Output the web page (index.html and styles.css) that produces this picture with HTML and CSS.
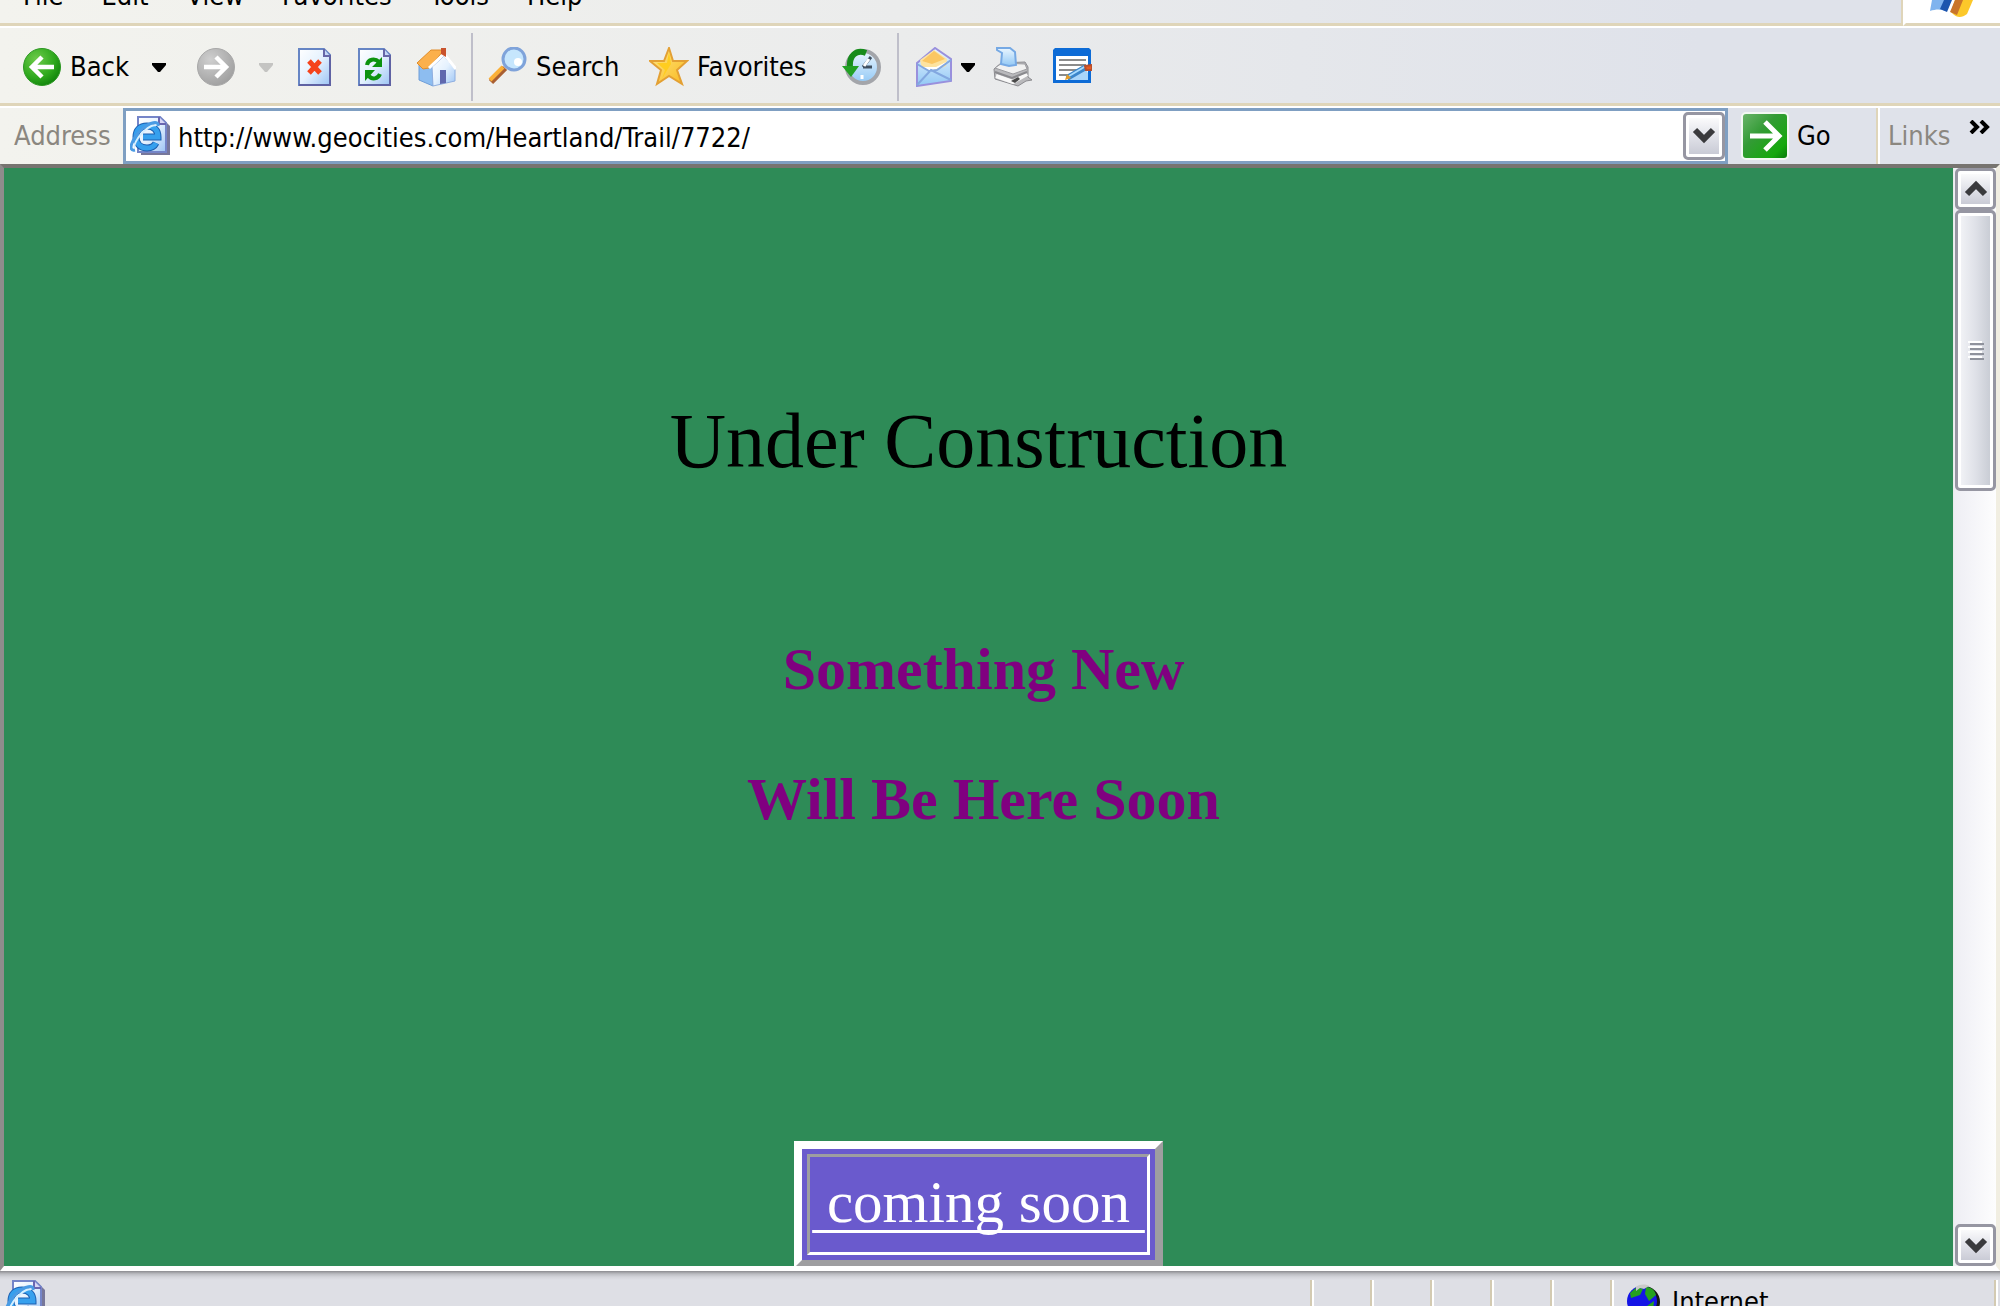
FILE: index.html
```html
<!DOCTYPE html>
<html lang="en">
<head>
<meta charset="utf-8">
<title>Under Construction</title>
<link rel="stylesheet" href="styles.css">
</head>
<body>
<svg class="defs" aria-hidden="true">
  <defs>
    <radialGradient id="green" cx=".35" cy=".3" r=".8"><stop offset="0" stop-color="#6fcb4c"/><stop offset=".6" stop-color="#2fa91d"/><stop offset="1" stop-color="#0b7d08"/></radialGradient>
    <radialGradient id="grey" cx=".35" cy=".3" r=".8"><stop offset="0" stop-color="#cfcfcf"/><stop offset="1" stop-color="#9c9c9c"/></radialGradient>
    <linearGradient id="sheet" x1="0" y1="0" x2="1" y2="1"><stop offset="0" stop-color="#fff"/><stop offset=".5" stop-color="#e4f1fe"/><stop offset="1" stop-color="#9cc4f4"/></linearGradient>
    <linearGradient id="blue" x1="0" y1="0" x2="0" y2="1"><stop offset="0" stop-color="#eaf6ff"/><stop offset="1" stop-color="#92c8f5"/></linearGradient>
    <linearGradient id="gold" x1="0" y1="0" x2="1" y2="1"><stop offset="0" stop-color="#ffe98a"/><stop offset="1" stop-color="#f9b91c"/></linearGradient>
    <linearGradient id="go" x1="0" y1="0" x2="1" y2="1"><stop offset="0" stop-color="#6cb56c"/><stop offset=".4" stop-color="#339b35"/><stop offset=".8" stop-color="#15a80c"/><stop offset="1" stop-color="#08750a"/></linearGradient>
    <symbol id="ie" viewBox="0 0 40 40">
      <path d="M10 3h23l7 7v29H11z" fill="#77779a"/>
      <path d="M8 1h22l6 6v29H8z" fill="url(#sheet)" stroke="#7585c8" stroke-width="2"/>
      <path d="M29 1v7h7" fill="#d8d6f5" stroke="#6a66b0" stroke-width="2"/>
      <path d="M26 27c-2 4-5 5-9 5-6 0-11-4-11-11s4-11 11-11 11 4 11 11H13" fill="none" stroke="#1d5fb0" stroke-width="7"/>
      <path d="M26 27c-2 4-5 5-9 5-6 0-11-4-11-11s4-11 11-11 11 4 11 11H13" fill="none" stroke="#36a0ee" stroke-width="5"/>
      <path d="M5 34C-3 36 2 22 12 13 20 6 29 4 28 10" fill="none" stroke="#4a9be4" stroke-width="3"/>
      <path d="M5 31C3 31 6 23 13 16 19 10 25 8 26 10" fill="none" stroke="#d6efff" stroke-width="2"/>
    </symbol>
  </defs>
</svg>

<header class="chrome">
  <div class="menu-row">
    <nav class="menu" aria-label="Menu bar">
      <a href="#file">File</a><a href="#edit">Edit</a><a href="#view">View</a><a href="#favorites">Favorites</a><a href="#tools">Tools</a><a href="#help">Help</a>
    </nav>
    <div class="flag">
      <svg width="48" height="20" viewBox="0 0 48 20" aria-hidden="true">
        <path d="M4 0h18l-4 11c-5-2-10-2-16 0z" fill="#7fb3ee"/><path d="M16 0h8l-5 12-7-3z" fill="#1c55ae"/><path d="M27 0h18l-6 14c-5 4-10 4-14 0l-2-2z" fill="#fcc82a"/><path d="M27 0h8l-6 15-7-3z" fill="#c9752b"/>
      </svg>
    </div>
  </div>

  <div class="toolbar" role="toolbar" aria-label="Standard buttons">
    <button class="tool back" type="button">
      <svg class="icon" viewBox="0 0 40 40"><circle cx="20" cy="20" r="18.500" fill="url(#green)" stroke="#2d9823"/><path d="M32 20H12M20 10 10 20l10 10" fill="none" stroke="#fff" stroke-width="4.500"/></svg>
      <span>Back</span>
    </button>
    <button class="drop" type="button" aria-label="Back history"><svg width="14" height="9" viewBox="0 0 14 9"><path d="M0 0h14v2L8 9H6L0 2z" fill="#000"/></svg></button>
    <button class="tool forward" type="button" aria-label="Forward">
      <svg class="icon" viewBox="0 0 40 40"><circle cx="20" cy="20" r="18.500" fill="url(#grey)" stroke="#a8a8a8"/><path d="M8 20h20M20 10l10 10-10 10" fill="none" stroke="#fff" stroke-width="4.500"/></svg>
    </button>
    <button class="drop drop-wide" type="button" aria-label="Forward history"><svg width="14" height="9" viewBox="0 0 14 9"><path d="M0 0h14v2L8 9H6L0 2z" fill="#c4c4c2"/></svg></button>
    <button class="tool" type="button" aria-label="Stop">
      <svg class="icon" viewBox="0 0 40 40"><path d="M3 2h25l6 6v30H3z" fill="url(#sheet)" stroke="#6685c4" stroke-width="2"/><path d="M34 8v30H3" fill="none" stroke="#5f62a3" stroke-width="2"/><path d="M28 2v7h6" fill="#c5d8f7" stroke="#6667a8" stroke-width="2"/><path d="m13 14 11 12M24 14 13 26" stroke="#f5431b" stroke-width="5"/></svg>
    </button>
    <button class="tool" type="button" aria-label="Refresh">
      <svg class="icon" viewBox="0 0 40 40"><path d="M3 2h25l6 6v30H3z" fill="url(#sheet)" stroke="#6685c4" stroke-width="2"/><path d="M34 8v30H3" fill="none" stroke="#5f62a3" stroke-width="2"/><path d="M28 2v7h6" fill="#c5d8f7" stroke="#6667a8" stroke-width="2"/><path d="M11 18c1-6 8-7 12-3M24 27c-2 5-8 6-11 2" fill="none" stroke="#0c930e" stroke-width="4"/><path d="M26 10v10H16zM9 34V23h10z" fill="#0c930e"/></svg>
    </button>
    <button class="tool" type="button" aria-label="Home">
      <svg class="icon" viewBox="0 0 40 40"><path d="M3 17v16l14 6V20z" fill="#8dbdf0" stroke="#6f9ed8"/><path d="M16 20 28 9l11 13v12l-22 5z" fill="url(#sheet)" stroke="#8eaee0"/><path d="M1 16 15 3h13L13 21l-6 1z" fill="#fbb04c" stroke="#e08c2a"/><path d="m13 21 15-14 12 15" fill="none" stroke="#fff" stroke-width="3"/><path d="M25 1h5v9l-5-3z" fill="#c9532d"/><path d="M24 23h6v13l-6 1z" fill="#6068ae"/></svg>
    </button>
    <span class="rule"></span>
    <button class="tool search" type="button">
      <svg class="icon" viewBox="0 0 40 40"><path d="m3 35 14-14" stroke="#a95f32" stroke-width="6"/><path d="m2 33 13-13" stroke="#fbb038" stroke-width="4"/><circle cx="26" cy="12" r="11" fill="#c6e6fd" stroke="#7fa3da" stroke-width="3"/><circle cx="30" cy="15" r="4" fill="#fff"/></svg>
      <span>Search</span>
    </button>
    <button class="tool favorites" type="button">
      <svg class="icon" viewBox="0 0 40 40"><path d="m20 1 4 13h14L28 23l5 14-13-8-12 8 4-14L1 14h14z" fill="url(#gold)" stroke="#e3a034" stroke-width="2"/><path d="m20 5 2 12-5 8-4 7 3-9-8-7h10z" fill="#ffcd20"/></svg>
      <span>Favorites</span>
    </button>
    <button class="tool" type="button" aria-label="History">
      <svg class="icon" viewBox="0 0 40 40"><circle cx="21" cy="20" r="16" fill="url(#blue)" stroke="#a3a5aa" stroke-width="4"/><path d="m21 20 8-10M21 20h9" stroke="#405060" stroke-width="3"/><path d="M27 12l-5 7M20 32v-4" stroke="#fff" stroke-width="3"/><path d="M24 6C14 2 7 9 8 20" fill="none" stroke="#178c1c" stroke-width="6"/><path d="M0 19h17L9 30z" fill="#22a024"/></svg>
    </button>
    <span class="rule"></span>
    <button class="tool mail" type="button" aria-label="Mail">
      <svg class="icon" viewBox="0 0 40 40"><path d="M3 16 21 1l16 11v22L3 39z" fill="url(#blue)" stroke="#9990dd" stroke-width="2"/><path d="M6 13 20 3l13 9-1 7-12 5-12-3z" fill="#fde3a0"/><path d="M8 14 20 4l11 8-13 5z" fill="#fbc763"/><path d="m8 20 9 4 13-5 2-4-10 5z" fill="#fff"/><path d="m3 38 14-15 20 10M3 17l12 7 8-1 14-10" fill="none" stroke="#83a8e0" stroke-width="2"/></svg>
    </button>
    <button class="drop drop-narrow" type="button" aria-label="Mail options"><svg width="14" height="9" viewBox="0 0 14 9"><path d="M0 0h14v2L8 9H6L0 2z" fill="#000"/></svg></button>
    <button class="tool" type="button" aria-label="Print">
      <svg class="icon" viewBox="0 0 40 40"><path d="m2 22 7-6 24-1 3 5v10l4 3-6 1-8 5L3 32z" fill="#b9b9bc" stroke="#8c8c90"/><path d="m3 21 7-5 23 1 2 5-14 5z" fill="#f1f1f1" stroke="#9c9ca0"/><path d="m4 29 17 6 14-8" fill="none" stroke="#f8f8f8" stroke-width="4"/><path d="m3 25 17 6 15-6" fill="none" stroke="#8a8a8e" stroke-width="2"/><path d="m19 34 7-4 2 2-5 4z" fill="#494949"/><path d="M5 1h13l5 4 1 13-7 1-8-2 1-11-5-3z" fill="url(#blue)" stroke="#76a9e4" stroke-width="2"/></svg>
    </button>
    <button class="tool" type="button" aria-label="Edit">
      <svg class="icon" viewBox="0 0 40 40"><path d="M3 1h34l2 2v33H1V3z" fill="#0d6bd6"/><path d="M4 9h32v24H4z" fill="#fff"/><path d="M7 13h27M7 18h27M7 23h18M7 28h10" stroke="#8b8b8b" stroke-width="2"/><path d="m23 24 9-6 4 8v7H17z" fill="#a9d5fa"/><path d="m15 31 19-11" stroke="#3c86ca" stroke-width="6"/><path d="m17 29 17-10" stroke="#a8dbff" stroke-width="2"/><path d="m13 33 2-6 4 4z" fill="#e59b27"/><path d="m33 19 7-1v5h-6z" fill="#e65a25" stroke="#b84e2c" stroke-width="2"/></svg>
    </button>
  </div>

  <div class="address-row">
    <label class="dim address-label" for="url">Address</label>
    <div class="combo">
      <svg class="icon" aria-hidden="true"><use href="#ie"/></svg>
      <input id="url" type="text" value="http://www.geocities.com/Heartland/Trail/7722/">
      <button class="xp combo-button" type="button" aria-label="Show addresses"><svg width="24" height="18" viewBox="0 0 24 18"><path d="m3 3 9 9 9-9" fill="none" stroke="#3a3a3d" stroke-width="6"/></svg></button>
    </div>
    <button class="go" type="button">
      <svg width="48" height="48" viewBox="0 0 48 48"><rect x="1" y="1" width="46" height="46" rx="4" fill="url(#go)" stroke="#f2f8f2" stroke-width="2"/><path d="M9 24h28M24 10l14 14-14 14" fill="none" stroke="#fff" stroke-width="5"/></svg>
      <span>Go</span>
    </button>
    <div class="links">
      <span class="dim">Links</span>
      <button class="more" type="button" aria-label="More links"><svg width="22" height="14" viewBox="0 0 22 14"><path d="m2 1 6 6-6 6M12 1l6 6-6 6" fill="none" stroke="#000" stroke-width="4"/></svg></button>
    </div>
  </div>
</header>

<div class="view">
  <main class="page">
    <h1>Under Construction</h1>
    <div class="notice">
      <h2>Something New</h2>
      <h2>Will Be Here Soon</h2>
    </div>
    <div class="badge"><a href="#soon">&nbsp;coming soon&nbsp;</a></div>
  </main>
  <div class="scrollbar">
    <button class="xp scroll-button" type="button" aria-label="Scroll up"><svg width="24" height="18" viewBox="0 0 24 18"><path d="m3 14 9-9 9 9" fill="none" stroke="#3a3a3d" stroke-width="6"/></svg></button>
    <div class="thumb"><svg width="16" height="20" viewBox="0 0 16 20"><path d="M0 1h14M0 6h14M0 11h14M0 16h14" stroke="#fff" stroke-width="2"/><path d="M2 3h14M2 8h14M2 13h14M2 18h14" stroke="#8f929c" stroke-width="2"/></svg></div>
    <button class="xp scroll-button scroll-down" type="button" aria-label="Scroll down"><svg width="24" height="18" viewBox="0 0 24 18"><path d="m3 4 9 9 9-9" fill="none" stroke="#3a3a3d" stroke-width="6"/></svg></button>
  </div>
</div>

<footer class="status">
  <div class="pane pane-main"><svg class="icon" aria-hidden="true"><use href="#ie"/></svg></div>
  <div class="pane"></div><div class="pane"></div><div class="pane"></div><div class="pane"></div><div class="pane"></div>
  <div class="pane zone">
    <svg width="34" height="34" viewBox="0 0 34 34" aria-hidden="true"><circle cx="18" cy="18" r="16" fill="#151515"/><circle cx="16" cy="17" r="15" fill="#1414e6"/><path d="M4 9 11 3l6 2-3 6-9 3zM20 3c6 0 9 4 10 8l-7 6-4-7zM21 22l7-5-1 10-6 3z" fill="#24a01f"/><path d="M10 3c4-3 9-3 13-1l-5 3-4-1-4 3z" fill="#c9c9c9"/></svg>
    <span>Internet</span>
  </div>
</footer>
</body>
</html>
```
FILE: styles.css
```css
* {
  box-sizing: border-box;
}

body {
  display: flex;
  flex-direction: column;
  height: 100vh;
  margin: 0;
  overflow: hidden;
  background: #dfe1e8;
  color: #000;
  font: 27px/32px "DejaVu Sans Condensed", "DejaVu Sans", sans-serif;
}

button {
  display: flex;
  align-items: center;
  padding: 0;
  border: 0;
  background: none;
  color: inherit;
  font: inherit;
  white-space: nowrap;
}

svg {
  display: block;
  flex: none;
}

.defs {
  position: absolute;
  width: 0;
  height: 0;
}

.icon {
  width: 40px;
  height: 40px;
}

.chrome {
  flex: none;
  background: linear-gradient(to right, #f3f3ee, #ebecec 45%, #dfe2ea 85%);
}

/* Menu bar */
.menu-row {
  display: flex;
  height: 28px;
  border-bottom: 2px solid #fff;
}

.menu {
  display: flex;
  flex: 1;
  gap: 38px;
  height: 26px;
  padding-left: 23px;
  border-right: 2px solid #dfd5b9;
  border-bottom: 3px solid #dfd5b9;
}

.menu a {
  margin-top: -20px;
  color: inherit;
  text-decoration: none;
}

.flag {
  width: 97px;
  padding-left: 22px;
  border-left: 3px solid #fff;
  border-bottom: 3px solid #dfd5b9;
  background: #fff;
}

/* Standard buttons */
.toolbar {
  display: flex;
  align-items: center;
  height: 80px;
  padding-left: 12px;
  border-bottom: 2px solid #fff;
  box-shadow: inset 0 -3px #dfd5b9;
}

.tool {
  gap: 8px;
  height: 64px;
  padding: 0 10px;
}

.back {
  width: 130px;
}

.forward {
  margin-left: 10px;
}

.search {
  width: 161px;
}

.favorites {
  width: 193px;
}

.mail {
  padding-right: 0;
}

.drop {
  justify-content: center;
  width: 34px;
  height: 64px;
}

.drop-wide {
  width: 40px;
}

.drop-narrow {
  width: 28px;
}

.rule {
  width: 2px;
  height: 68px;
  margin: 0 5px;
  background: #bfbfca;
}

/* Address bar */
.address-row {
  display: flex;
  height: 56px;
}

.dim {
  color: #8b8780;
}

.address-label {
  width: 123px;
  padding: 12px 0 0 14px;
}

.combo {
  display: flex;
  flex: 1;
  align-items: center;
  padding: 0 0 0 4px;
  border: 3px solid #7f9fc2;
  background: #fff;
}

.combo input {
  flex: 1;
  min-width: 0;
  height: 40px;
  padding: 2px 0 0 8px;
  border: 0;
  outline: 0;
  background: none;
  color: inherit;
  font: inherit;
}

.xp {
  justify-content: center;
  border: 3px solid #9696a2;
  border-radius: 5px;
  background: linear-gradient(#fff, #e1e2e9 50%, #c5c7d2);
  box-shadow: inset 0 0 0 3px #fff;
}

.combo-button {
  width: 42px;
  height: 48px;
}

.go {
  gap: 8px;
  width: 148px;
  padding-left: 13px;
}

.links {
  display: flex;
  justify-content: space-between;
  width: 124px;
  padding: 12px 9px 0 10px;
  border-left: 2px solid #dfd5b9;
  box-shadow: inset 2px 0 #fff;
}

.links .more {
  align-self: flex-start;
}

/* Document view */
.view {
  display: flex;
  flex: 1;
  min-height: 0;
  border: solid;
  border-width: 4px 4px 5px 4px;
  border-color: #777470 #f1eee2 #fff #8f8c8c;
}

.page {
  flex: 1;
  padding-top: 228px;
  overflow: hidden;
  background: #2e8b57;
  font-family: "Liberation Serif", serif;
  text-align: center;
}

.page h1 {
  margin: 0;
  font-size: 78px;
  font-weight: 400;
  line-height: 90px;
}

.notice {
  display: grid;
  gap: 60px;
  margin: 148px 0 307px;
  padding-left: 10px;
  color: #800080;
}

.page h2 {
  margin: 0;
  font-size: 60px;
  line-height: 70px;
}

.badge {
  width: max-content;
  margin: 0 auto;
  padding: 5px;
  border: 8px solid;
  border-color: #fff #9e9ea0 #9e9ea0 #fff;
  background: #6a5acd;
}

.badge a {
  display: block;
  padding: 11px 2px 15px;
  border: 3px solid;
  border-color: #9e9ea0 #fff #fff #9e9ea0;
  color: #fff;
  font-size: 59px;
  line-height: 69px;
  text-decoration-line: underline;
  text-decoration-thickness: 3px;
  text-decoration-skip-ink: none;
  text-underline-offset: 8px;
}

.scrollbar {
  display: flex;
  flex-direction: column;
  width: 43px;
  padding: 0 0 0 1px;
  border-left: 1px solid #e9ebea;
  background: linear-gradient(to right, #eeeef4, #fdfdfe);
}

.scroll-button {
  width: 41px;
  height: 42px;
}

.scroll-down {
  margin-top: auto;
}

.thumb {
  display: flex;
  align-items: center;
  justify-content: center;
  height: 281px;
  border: 3px solid #9696a2;
  border-radius: 5px;
  background: linear-gradient(to right, #f4f5f8, #dfe1e8 50%, #c5c9d1);
  box-shadow: inset 0 0 0 3px #fff;
}

/* Status bar */
.status {
  display: flex;
  flex: none;
  height: 35px;
  padding-top: 9px;
  overflow: hidden;
  background: linear-gradient(#8b8b8f, #bcbdc2 3px, #d3d4da 6px, #dedfe5 9px);
}

.pane {
  width: 60px;
  height: 40px;
  border-right: 2px solid #d3cab2;
  box-shadow: 2px 0 #fff;
}

.pane-main {
  flex: 1;
  padding-left: 5px;
}

.zone {
  display: flex;
  gap: 12px;
  width: 384px;
  margin-right: 4px;
  padding: 4px 0 0 14px;
}

.zone span {
  padding-top: 2px;
}
```
